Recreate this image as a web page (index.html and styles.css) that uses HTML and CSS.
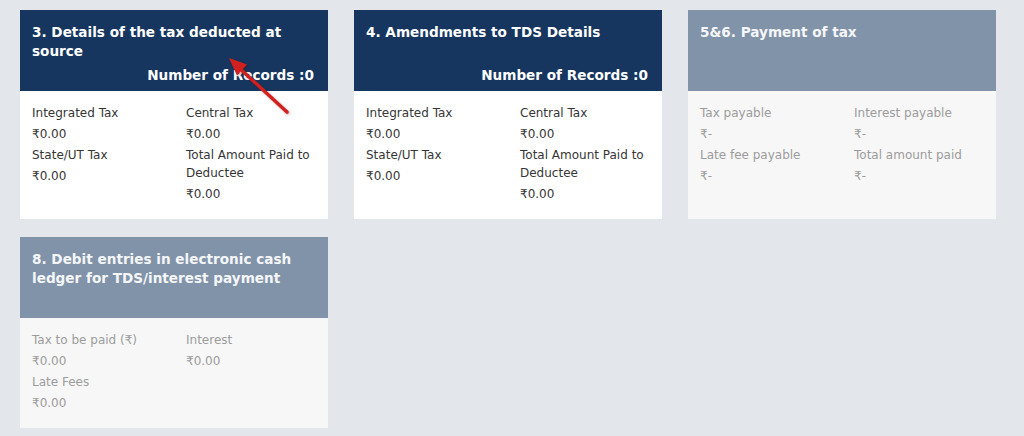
FILE: index.html
```html
<!DOCTYPE html>
<html>
<head>
<meta charset="utf-8">
<link rel="stylesheet" href="styles.css">
</head>
<body>
<div class="page">
  <div class="grid">
    <div class="card">
      <div class="card-head">
        <div class="title">3. Details of the tax deducted at source</div>
        <div class="records">Number of Records :0</div>
      </div>
      <div class="card-body">
        <div class="cell"><div class="lbl">Integrated Tax</div><div class="val">₹0.00</div></div>
        <div class="cell"><div class="lbl">Central Tax</div><div class="val">₹0.00</div></div>
        <div class="cell"><div class="lbl">State/UT Tax</div><div class="val">₹0.00</div></div>
        <div class="cell"><div class="lbl">Total Amount Paid to Deductee</div><div class="val">₹0.00</div></div>
      </div>
    </div>
    <div class="card">
      <div class="card-head">
        <div class="title">4. Amendments to TDS Details</div>
        <div class="records">Number of Records :0</div>
      </div>
      <div class="card-body">
        <div class="cell"><div class="lbl">Integrated Tax</div><div class="val">₹0.00</div></div>
        <div class="cell"><div class="lbl">Central Tax</div><div class="val">₹0.00</div></div>
        <div class="cell"><div class="lbl">State/UT Tax</div><div class="val">₹0.00</div></div>
        <div class="cell"><div class="lbl">Total Amount Paid to Deductee</div><div class="val">₹0.00</div></div>
      </div>
    </div>
    <div class="card disabled">
      <div class="card-head">
        <div class="title">5&amp;6. Payment of tax</div>
      </div>
      <div class="card-body">
        <div class="cell"><div class="lbl">Tax payable</div><div class="val">₹-</div></div>
        <div class="cell"><div class="lbl">Interest payable</div><div class="val">₹-</div></div>
        <div class="cell"><div class="lbl">Late fee payable</div><div class="val">₹-</div></div>
        <div class="cell"><div class="lbl">Total amount paid</div><div class="val">₹-</div></div>
      </div>
    </div>
    <div class="card disabled">
      <div class="card-head">
        <div class="title">8. Debit entries in electronic cash ledger for TDS/interest payment</div>
      </div>
      <div class="card-body">
        <div class="cell"><div class="lbl">Tax to be paid (₹)</div><div class="val">₹0.00</div></div>
        <div class="cell"><div class="lbl">Interest</div><div class="val">₹0.00</div></div>
        <div class="cell"><div class="lbl">Late Fees</div><div class="val">₹0.00</div></div>
        <div class="cell"></div>
      </div>
    </div>
  </div>
  <svg class="arrow" width="80" height="80" viewBox="0 0 80 80">
    <line x1="68" y1="64" x2="17" y2="17" stroke="#d2201e" stroke-width="3.4" stroke-linecap="round"/>
    <polygon points="10,10 28,16.5 18,27.5" fill="#d2201e"/>
  </svg>
</div>
</body>
</html>
```
FILE: styles.css
```css
html, body {
  margin: 0;
  padding: 0;
  background: #e3e7eb;
}
body {
  font-family: "DejaVu Sans", Verdana, sans-serif;
  width: 1024px;
  height: 436px;
  overflow: hidden;
}
.page {
  position: relative;
  padding: 10px 20px;
}
.grid {
  display: grid;
  grid-template-columns: 308px 308px 308px;
  column-gap: 26px;
  row-gap: 18px;
}
.card {
  background: #ffffff;
  display: flex;
  flex-direction: column;
}
.card-head {
  background: #16365f;
  color: #ffffff;
  height: 81px;
  box-sizing: border-box;
  padding: 13px 14px 7px 12px;
  display: flex;
  flex-direction: column;
  font-weight: bold;
  font-size: 13.6px;
}
.title {
  line-height: 19px;
}
.records {
  margin-top: auto;
  text-align: right;
  line-height: 18px;
}
.card-body {
  display: grid;
  grid-template-columns: 1fr 1fr;
  padding: 13px 0 13px 0;
  font-size: 12px;
  line-height: 18px;
  color: #363636;
  flex: 1;
  align-content: start;
}
.cell {
  padding: 0 12px;
}
.lbl, .val {
  margin-bottom: 3px;
}
.disabled {
  background: #f7f7f7;
}
.disabled .card-head {
  background: #8193a9;
  color: #f4f6f8;
}
.disabled .card-body {
  color: #9c9c9c;
}
.arrow {
  position: absolute;
  left: 219px;
  top: 48px;
  filter: drop-shadow(1px 1px 1px rgba(90, 0, 0, 0.35));
}
```
